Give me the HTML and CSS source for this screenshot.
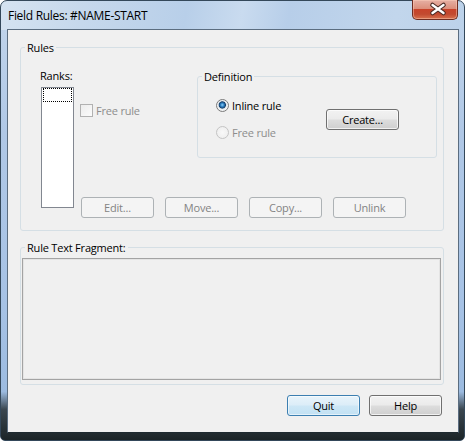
FILE: index.html
```html
<!DOCTYPE html>
<html>
<head>
<meta charset="utf-8">
<title>Field Rules</title>
<link rel="stylesheet" href="styles.css">
</head>
<body>
<div class="window">
  <div class="titlebar">
    <span class="title">Field Rules: #NAME-START</span>
    <div class="close">
      <svg width="46" height="20" viewBox="0 0 46 20">
        <path d="M19.5 6 L30.5 14 M30.5 6 L19.5 14" stroke="#4a2a24" stroke-width="4.6" stroke-linecap="round" fill="none"/>
        <path d="M19.5 6 L30.5 14 M30.5 6 L19.5 14" stroke="#ffffff" stroke-width="2.4" stroke-linecap="round" fill="none"/>
      </svg>
    </div>
  </div>
  <div class="client">
    <fieldset class="group rules">
      <legend>Rules</legend>
      <div class="rules-body">
        <div class="ranks">
          <div class="label">Ranks:</div>
          <div class="listbox"><div class="focus"></div></div>
        </div>
        <div class="rules-right">
          <div class="top-row">
            <label class="check disabled"><span class="box"></span>Free rule</label>
            <fieldset class="group definition">
              <legend>Definition</legend>
              <div class="def-body">
                <div class="radios">
                  <label class="radio checked"><span class="dot"></span>Inline rule</label>
                  <label class="radio disabled"><span class="dot"></span>Free rule</label>
                </div>
                <button class="btn create">Create...</button>
              </div>
            </fieldset>
          </div>
          <div class="btn-row">
            <button class="btn" disabled>Edit...</button>
            <button class="btn" disabled>Move...</button>
            <button class="btn" disabled>Copy...</button>
            <button class="btn" disabled>Unlink</button>
          </div>
        </div>
      </div>
    </fieldset>
    <fieldset class="group fragment">
      <legend>Rule Text Fragment:</legend>
      <div class="textbox"></div>
    </fieldset>
    <div class="footer">
      <button class="btn default">Quit</button>
      <button class="btn">Help</button>
    </div>
  </div>
</div>
</body>
</html>
```
FILE: styles.css
```css
* { box-sizing: border-box; }
html, body { margin: 0; padding: 0; background: #ffffff; }
body {
  font-family: "Open Sans", "Noto Sans", sans-serif;
  font-size: 11px;
  letter-spacing: -0.2px;
  font-weight: 400;
  color: #000;
}

.window {
  width: 465px;
  height: 441px;
  border: 1px solid #34485a;
  border-radius: 7px 7px 5px 5px;
  padding: 0 5px 7px 6px;
  display: flex;
  flex-direction: column;
  background:
    linear-gradient(100deg, #d5e3f1 0%, #c6d8ec 18%, #b8cfe9 40%, #c9dbef 52%, #b7cee9 62%, #c2d6ec 85%, #bcd2ea 100%) 0 0 / 100% 29px no-repeat,
    linear-gradient(180deg, #c3d6ec 0%, #b0c8e6 30%, #a6c2e5 70%, #9cbbe0 89%, #3b4750 93%, #1b2427 100%);
}

.titlebar {
  height: 28px;
  display: flex;
  justify-content: space-between;
  align-items: center;
}
.title {
  padding-left: 1px;
  padding-top: 1px;
  font-size: 12px;
  letter-spacing: -0.3px;
  color: #000;
}
.close {
  align-self: flex-start;
  margin-top: -1px;
  margin-right: 1px;
  width: 46px;
  height: 20px;
  border: 1px solid #6e2d22;
  border-top: none;
  border-radius: 0 0 5px 5px;
  background: linear-gradient(180deg, #e6b0a4 0%, #dc8f7c 45%, #c8432a 50%, #c24a30 75%, #d8724f 100%);
  box-shadow: inset 0 0 0 1px rgba(255, 210, 190, 0.45);
}
.close svg { display: block; margin-top: -1px; }

.client {
  flex: 1;
  background: #f0f0f0;
  border: 1px solid #5b6d80;
  border-bottom-color: #1e2a30;
  padding: 10px 14px 0 12px;
  display: flex;
  flex-direction: column;
}

fieldset.group {
  margin: 0;
  padding: 0;
  min-width: 0;
  border: 1px solid #d5dfe5;
  border-radius: 3px;
}
fieldset.group > legend {
  margin-left: 4px;
  padding: 0 2px;
  height: 15px;
  line-height: 15px;
}

.rules-body {
  display: flex;
  padding: 13px 0 12px 19px;
}
.ranks {
  width: 40px;
  flex: none;
}
.label { height: 15px; line-height: 15px; }
.listbox {
  margin: 4px 0 0 1px;
  width: 33px;
  height: 121px;
  border: 1px solid #828790;
  background: #fff;
  padding: 0 1px;
}
.focus {
  height: 14px;
  border: 1px dotted #000;
}

.rules-right { display: flex; flex-direction: column; }
.top-row { display: flex; align-items: flex-start; }

.check {
  width: 117px;
  margin-top: 35px;
  display: flex;
  align-items: center;
  height: 15px;
  gap: 3px;
}
.check .box {
  width: 13px;
  height: 13px;
  border: 1px solid #b1b1b1;
  background: linear-gradient(135deg, #ececec, #fbfbfb);
}
.disabled { color: #8d8d8d; }

.definition {
  width: 240px;
  margin-top: 1px !important;
}
.definition > legend { margin-left: 6px; }
.def-body {
  display: flex;
  align-items: flex-start;
  padding: 14px 0 17px 18px;
}
.radios {
  width: 110px;
  display: flex;
  flex-direction: column;
  gap: 12px;
}
.radio {
  display: flex;
  align-items: center;
  gap: 3px;
  height: 15px;
}
.radio .dot {
  width: 13px;
  height: 13px;
  border-radius: 50%;
  border: 1px solid #c4c4c4;
  background: radial-gradient(circle, #f8f8f8 0, #ececec 100%);
}
.radio.checked .dot {
  border-color: #7a7a7a;
  background: radial-gradient(circle at 48% 45%, #8fd0fa 0, #2b7fc2 1.8px, #163f6b 3.3px, #cfd9e3 3.9px, #eef0f2 4.6px, #f8f8f8 100%);
}
.create { margin-top: 11px; }

.btn-row {
  display: flex;
  gap: 11px;
  margin: 39px 0 0 1px;
}

.btn {
  width: 73px;
  height: 21px;
  padding: 0;
  font: inherit;
  letter-spacing: inherit;
  color: #000;
  line-height: 19px;
  border: 1px solid #707070;
  border-radius: 3px;
  background: linear-gradient(180deg, #f2f2f2 0%, #ebebeb 48%, #dddddd 52%, #cfcfcf 100%);
  box-shadow: inset 0 0 0 1px rgba(255, 255, 255, 0.7);
}
.btn:disabled {
  border-color: #adb2b5;
  background: #f4f4f4;
  color: #838383;
  box-shadow: none;
}
.btn.default {
  border-color: #3c7fb1;
  background: linear-gradient(180deg, #e8f4fb 0%, #dcedf8 48%, #cde7f6 52%, #c2e1f3 100%);
  box-shadow: inset 0 0 0 1px rgba(255, 255, 255, 0.55);
}

.fragment { margin-top: 9px !important; }
.textbox {
  margin: 3px 2px 4px 1px;
  height: 122px;
  border: 1px solid #a3a3a3;
  background: #f0f0f0;
  box-shadow: inset 0 0 0 1px #e4e4e4;
}

.footer {
  display: flex;
  justify-content: flex-end;
  gap: 9px;
  margin: 10px 2px 0 0;
}
```
